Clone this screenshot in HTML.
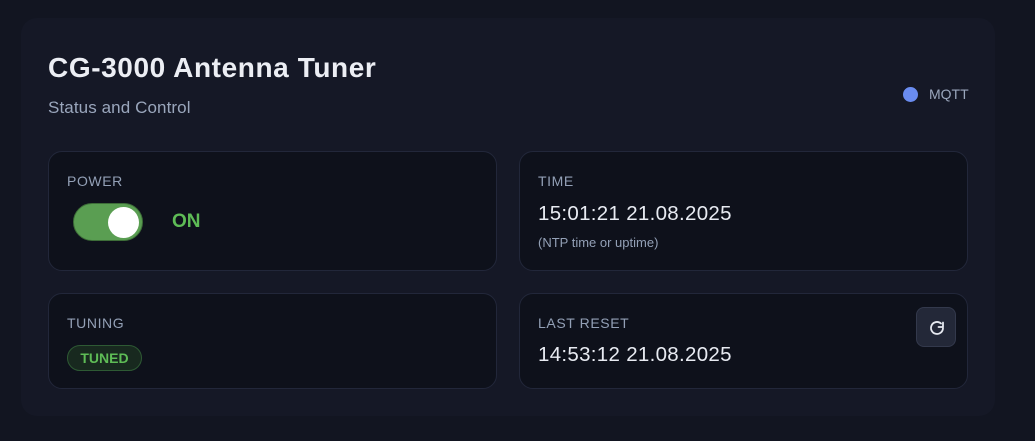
<!DOCTYPE html>
<html><head><meta charset="utf-8"><style>
*{box-sizing:border-box;margin:0;padding:0}
html,body{width:1035px;height:441px;background:#121521;font-family:"Liberation Sans",sans-serif;overflow:hidden}
.outer{position:absolute;left:21px;top:18px;width:974px;height:398px;background:#151826;border-radius:16px}
h1{position:absolute;left:48px;top:52px;font-size:28px;font-weight:bold;color:#eceef4;letter-spacing:0.6px}
.sub{position:absolute;left:48px;top:98px;font-size:17px;color:#9aa6bc;letter-spacing:0.1px}
.mq{position:absolute;left:903px;top:86px;font-size:14px;color:#9aa6bc;display:flex;align-items:center}
.mq i{width:15px;height:15px;border-radius:50%;background:#6a8cf0;display:inline-block;margin-right:11px}
.card{position:absolute;background:#0e111b;border:1px solid #22273a;border-radius:14px}
.lab{position:absolute;left:18px;font-size:14px;letter-spacing:0.6px;color:#93a0b6}
.val{position:absolute;left:18px;font-size:20.5px;color:#e8ebf2;letter-spacing:0.3px}
.tog{position:absolute;left:24px;top:51px;width:70px;height:38px;border-radius:19px;background:#5a9e52;border:1px solid #3d6d38}
.tog b{position:absolute;right:3px;top:3px;width:31px;height:31px;border-radius:50%;background:#fff}
.on{position:absolute;left:123px;top:59px;font-size:19px;font-weight:bold;color:#5ebc56}
.badge{position:absolute;left:18px;top:51px;width:75px;height:26px;border-radius:13px;background:#18291f;border:1px solid #2e5a34;color:#5ebc56;font-size:14px;font-weight:bold;text-align:center;line-height:24px}
.btn{position:absolute;right:11px;top:13px;width:40px;height:40px;border-radius:8px;background:#232838;border:1px solid #33394c}
</style></head><body>
<div class="outer"></div>
<h1>CG-3000 Antenna Tuner</h1>
<div class="sub">Status and Control</div>
<div class="mq"><i></i>MQTT</div>
<div class="card" style="left:48px;top:151px;width:449px;height:120px">
<div class="lab" style="top:21px">POWER</div>
<div class="tog"><b></b></div><div class="on">ON</div>
</div>
<div class="card" style="left:519px;top:151px;width:449px;height:120px">
<div class="lab" style="top:21px">TIME</div>
<div class="val" style="top:50px">15:01:21 21.08.2025</div>
<div class="lab" style="top:83px;font-size:13px;letter-spacing:0">(NTP time or uptime)</div>
</div>
<div class="card" style="left:48px;top:293px;width:449px;height:96px">
<div class="lab" style="top:21px">TUNING</div>
<div class="badge">TUNED</div>
</div>
<div class="card" style="left:519px;top:293px;width:449px;height:96px">
<div class="lab" style="top:21px">LAST RESET</div>
<div class="val" style="top:49px">14:53:12 21.08.2025</div>
<div class="btn"><svg width="40" height="40" viewBox="0 0 40 40"><path d="M26 20a6 6 0 1 1-2-4.5" fill="none" stroke="#e6e9f0" stroke-width="1.8" stroke-linecap="round"/><path d="M26 14.5v4.5h-4.5" fill="none" stroke="#e6e9f0" stroke-width="1.8" stroke-linecap="round" stroke-linejoin="round"/></svg></div>
</div>
</body></html>
